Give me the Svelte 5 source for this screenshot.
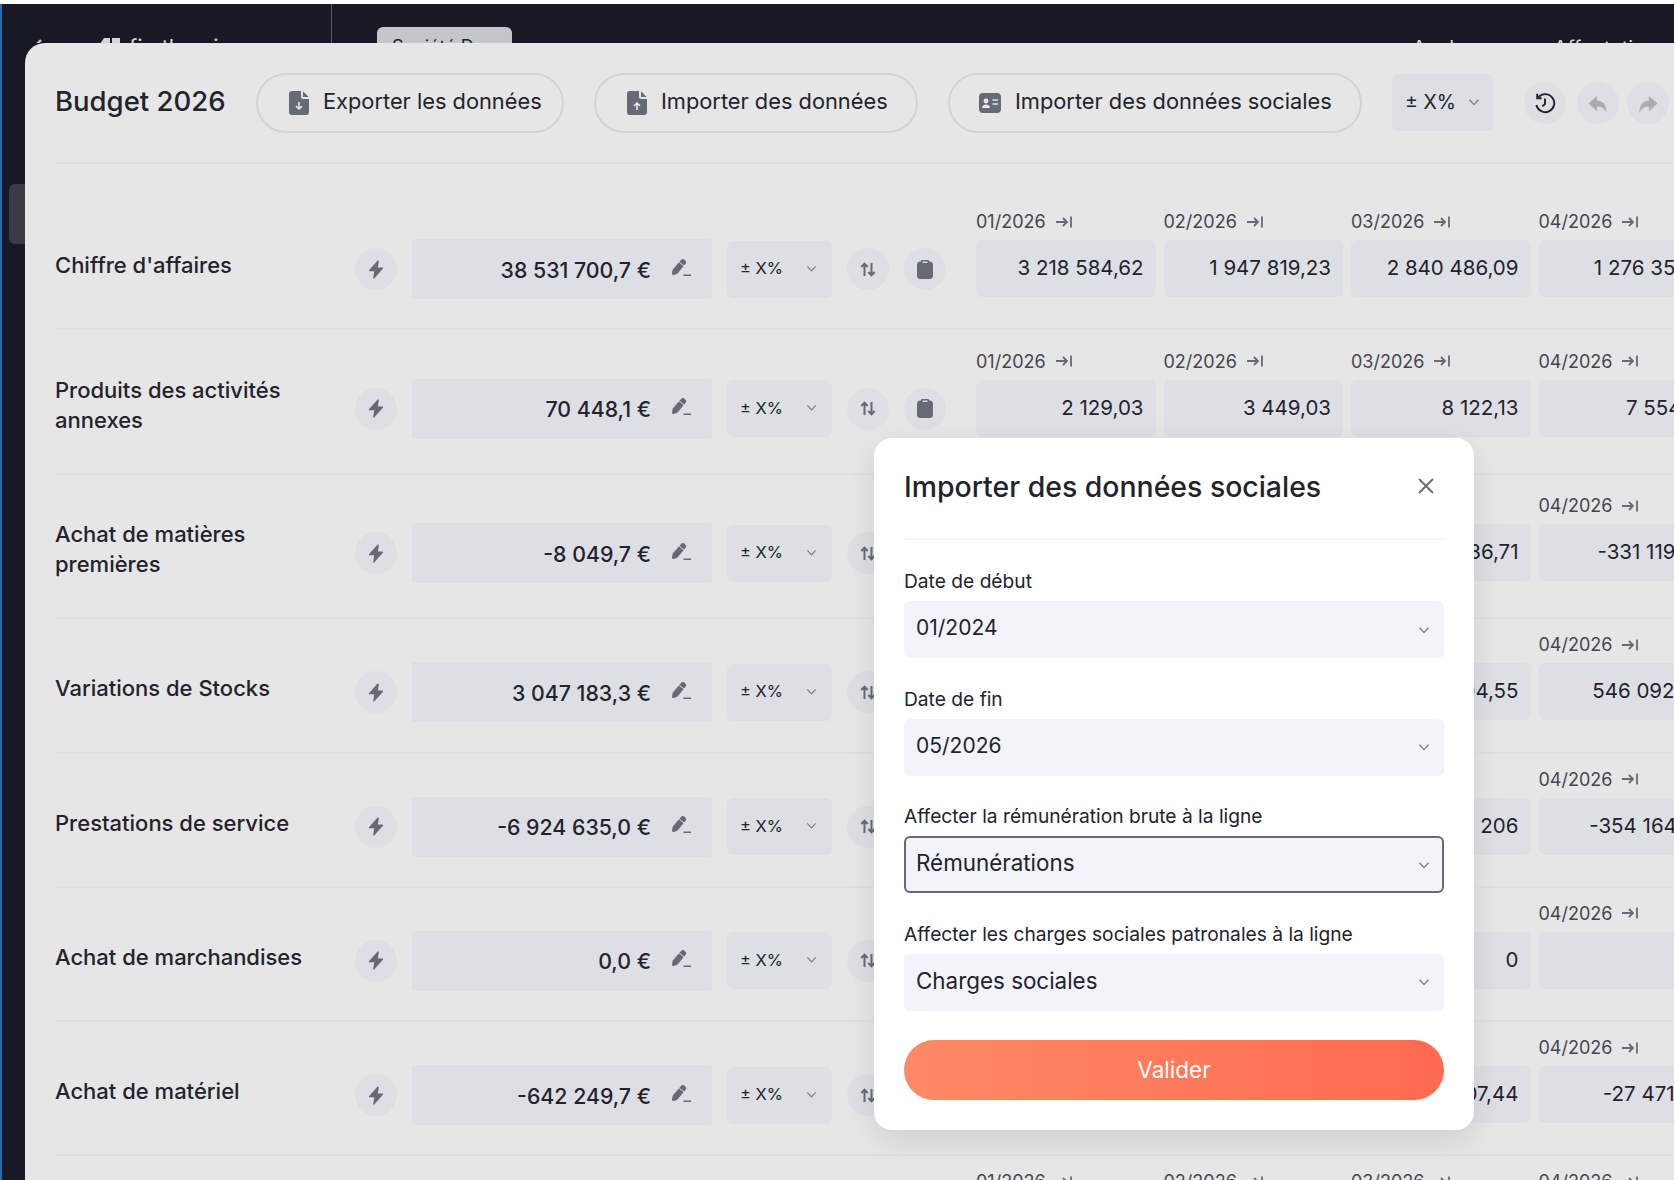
<script lang="ts">
  const months = ['01/2026', '02/2026', '03/2026', '04/2026'];

  const rows = [
    { title: "Chiffre d'affaires", total: '38 531 700,7 €', cells: ['3 218 584,62', '1 947 819,23', '2 840 486,09', '1 276 354,6'] },
    { title: 'Produits des activités annexes', tall: true, total: '70 448,1 €', cells: ['2 129,03', '3 449,03', '8 122,13', '7 554,18'] },
    { title: 'Achat de matières premières', tall: true, total: '-8 049,7 €', cells: ['-412 906,12', '-286 340,55', '-507 136,71', '-331 119,80'] },
    { title: 'Variations de Stocks', total: '3 047 183,3 €', cells: ['318 204,10', '421 770,62', '275 604,55', '546 092,90'] },
    { title: 'Prestations de service', total: '-6 924 635,0 €', cells: ['-512 880', '-604 118', '-490 206', '-354 164,70'] },
    { title: 'Achat de marchandises', total: '0,0 €', cells: ['0', '0', '0', '0'] },
    { title: 'Achat de matériel', total: '-642 249,7 €', cells: ['-31 204,18', '-42 661,02', '-58 207,44', '-27 471,90'] },
    { title: 'Services extérieurs', total: '-118 402,5 €', cells: ['-9 204,11', '-8 731,40', '-10 118,06', '-9 870,22'] }
  ];

  const fields = [
    { label: 'Date de début', value: '01/2024', date: true },
    { label: 'Date de fin', value: '05/2026', date: true },
    { label: 'Affecter la rémunération brute à la ligne', value: 'Rémunérations', focused: true },
    { label: 'Affecter les charges sociales patronales à la ligne', value: 'Charges sociales' }
  ];
</script>

{#snippet chevron(size = 14)}
  <svg class="chevron" width={size} height={size} viewBox="0 0 14 14" fill="none" stroke="currentColor" stroke-width="1.3"><path d="M2.5 4.8 7 9.6l4.5-4.8" /></svg>
{/snippet}

{#snippet fileIcon(up = false)}
  <svg width="20" height="24" viewBox="0 0 20 24">
    <path fill="#666a75" d="M3 0h9v5.5a2.5 2.5 0 0 0 2.5 2.5H20v13a3 3 0 0 1-3 3H3a3 3 0 0 1-3-3V3a3 3 0 0 1 3-3Z" />
    <path fill="#666a75" d="M14 .3 19.7 6h-5.2a.5.5 0 0 1-.5-.5Z" />
    <path fill="none" stroke="#e6e6e6" stroke-width="1.6" d={up ? 'M10 19v-7M7 14.8 10 12l3 2.8' : 'M10 11v7M7 15.2l3 2.8 3-2.8'} />
  </svg>
{/snippet}

<div class="page">
  <header class="topbar">
    <div class="brand">
      <svg class="back" width="14" height="20" viewBox="0 0 14 20" fill="none" stroke="#c9cad0" stroke-width="2.4"><path d="M11 2 3 10l8 8" /></svg>
      <svg class="logo" width="22" height="20" viewBox="0 0 22 20" fill="#d4d5da"><path d="M0 9 6 0h6v20H0ZM14 0h8v20h-8Z" /></svg>
      <span>fin the air</span>
    </div>
    <div class="tab">Société Demo</div>
    <nav class="topnav">
      <span>Analyse</span>
      <span>Affectation</span>
    </nav>
  </header>

  <div class="handle"></div>

  <main class="panel">
    <div class="toolbar">
      <h1>Budget 2026</h1>
      <button class="pill export">{@render fileIcon(false)} <span>Exporter les données</span></button>
      <button class="pill import">{@render fileIcon(true)} <span>Importer des données</span></button>
      <button class="pill social">
        <svg width="22" height="20" viewBox="0 0 22 20">
          <rect width="22" height="20" rx="4" fill="#666a75" />
          <circle cx="7" cy="8" r="2.4" fill="#e6e6e6" />
          <path fill="#e6e6e6" d="M3 15c0-2.4 1.8-3.6 4-3.6s4 1.2 4 3.6Z" />
          <path stroke="#e6e6e6" stroke-width="1.5" d="M13.5 7H19M13.5 11H19" />
        </svg>
        <span>Importer des données sociales</span>
      </button>
      <div class="percent big">± X% {@render chevron(14)}</div>
      <div class="round history">
        <svg width="22" height="22" viewBox="0 0 22 22" fill="none" stroke="#22232c" stroke-width="1.9"><path d="M4.2 5.5A9 9 0 1 1 2.4 13" /><path d="M3.2 1.8v4.4h4.4" /><path d="M11 6.5V12l-2.6 2.4" /></svg>
      </div>
      <div class="round undo">
        <svg width="22" height="19" viewBox="0 0 22 20" fill="#a9acb4"><path d="M10 1 1 9l9 8v-5c5 0 8 2 10 7 0-8-3-13-10-13Z" /></svg>
      </div>
      <div class="round redo">
        <svg width="22" height="19" viewBox="0 0 22 20" fill="#a9acb4"><path d="M12 1l9 8-9 8v-5c-5 0-8 2-10 7 0-8 3-13 10-13Z" /></svg>
      </div>
    </div>

    <div class="rows">
      {#each rows as row}
        <section class="row" class:tall={row.tall}>
          <h2>{row.title}</h2>
          <div class="round">
            <svg width="16" height="19" viewBox="0 0 16 19" fill="#666a75"><path d="M9.6.5 1 10.2c-.4.5 0 1.1.6 1.1h4.6L5.2 18c-.1.6.6.9 1 .4l8.7-9.6c.4-.5.1-1.2-.6-1.2H9.9l.9-6.3c.1-.7-.7-1.1-1.2-.8Z" /></svg>
          </div>
          <div class="total">
            <span>{row.total}</span>
            <svg class="pencil" width="20" height="20" viewBox="0 0 20 20" fill="#666a75">
              <path d="M10.500 1.500c1-.8 2.300-.6 3 .2l1.200 1.300c.7.8.6 2-.2 2.800L7 15c-.5.6-1.200 1-2 1.200l-2.400.7c-1 .2-1.800-.6-1.600-1.600l.6-3c.1-.7.5-1.300 1-1.800Z" />
              <path stroke="#dedfe4" stroke-width="1" d="M8.300 4.200l5 4" />
              <rect x="12.500" y="16.500" width="7.500" height="1.500" />
            </svg>
          </div>
          <div class="percent">± X% {@render chevron(13)}</div>
          <div class="round">
            <svg width="16" height="15" viewBox="0 0 16 15" fill="none" stroke="#666a75" stroke-width="2"><path d="M4.500 14V2M1.300 5 4.500 1.700 7.700 5M11.500 1v12M8.300 10l3.200 3.300 3.200-3.300" /></svg>
          </div>
          <div class="round">
            <svg width="16" height="19" viewBox="0 0 16 19" fill="#666a75"><path d="M5 0h6a1 1 0 0 1 1 1v.5h.5A3.500 3.500 0 0 1 16 5v10.500a3.500 3.500 0 0 1-3.500 3.500h-9A3.500 3.500 0 0 1 0 15.500V5a3.500 3.500 0 0 1 3.500-3.500H4V1a1 1 0 0 1 1-1Z" /><rect x="5.500" y="1.600" width="5" height="1.500" rx=".7" fill="#dedfe4" /></svg>
          </div>
          <div class="months">
            {#each months as month, i}
              <div class="month">
                <div class="month-label">
                  <span>{month}</span>
                  <svg width="18" height="14" viewBox="0 0 18 14" fill="none" stroke="#666a75" stroke-width="1.800"><path d="M1 7h11M8 3l4 4-4 4M16 1.500v11" /></svg>
                </div>
                <div class="cell">{row.cells[i]}</div>
              </div>
            {/each}
          </div>
        </section>
      {/each}
    </div>
  </main>

  <div class="modal" role="dialog" aria-label="Importer des données sociales">
    <div class="modal-head">
      <h3>Importer des données sociales</h3>
      <svg width="18" height="18" viewBox="0 0 18 18" fill="none" stroke="#666a75" stroke-width="1.800"><path d="M2 2l14 14M16 2 2 16" /></svg>
    </div>
    {#each fields as field}
      <div class="field">
        <div class="field-label">{field.label}</div>
        <div class="select" class:focused={field.focused} class:date={field.date}>
          <span>{field.value}</span>
          {@render chevron(14)}
        </div>
      </div>
    {/each}
    <button class="submit">Valider</button>
  </div>
</div>

<style>
  :global(body) {
    margin: 0;
    background: #181924;
  }

  .page {
    position: relative;
    width: 1674px;
    height: 1180px;
    overflow: hidden;
    background: #181924;
    border-top: 4px solid #ffffff;
    box-sizing: border-box;
    font-family: Inter, 'Noto Sans', sans-serif;
    color: #22232c;
  }

  .page::before {
    content: '';
    position: absolute;
    left: 0;
    top: 0;
    bottom: 0;
    width: 2px;
    background: #2a6aa8;
  }

  .topbar {
    display: flex;
    align-items: flex-start;
    height: 39px;
    overflow: hidden;
    color: #d4d5da;
    white-space: nowrap;
  }

  .brand {
    display: flex;
    align-items: flex-start;
    flex: none;
    width: 332px;
    height: 100%;
    padding: 30px 0 0 30px;
    box-sizing: border-box;
    border-right: 1px solid #5a5b66;
    font-size: 22px;
  }

  .back {
    margin: 4px 54px 0 0;
  }

  .logo {
    margin: 4px 9px 0 0;
  }

  .tab {
    margin: 23px 0 0 45px;
    width: 135px;
    height: 40px;
    padding: 9px 15px;
    box-sizing: border-box;
    background: #c5c6ca;
    border-radius: 6px 6px 0 0;
    color: #22232c;
    font-size: 18px;
    overflow: hidden;
  }

  .topnav {
    display: flex;
    gap: 66px;
    margin: 32px 0 0 auto;
    padding-right: 17px;
    font-size: 20px;
  }

  .handle {
    position: absolute;
    left: 9px;
    top: 180px;
    width: 20px;
    height: 60px;
    background: #3a3b45;
    border-radius: 6px 0 0 6px;
  }

  .panel {
    position: absolute;
    left: 25px;
    top: 39px;
    width: 1700px;
    height: 1200px;
    padding: 0 0 0 30px;
    box-sizing: border-box;
    background: #e6e6e6;
    border-radius: 20px 0 0 0;
  }

  .toolbar {
    display: flex;
    align-items: center;
    height: 121px;
    box-sizing: border-box;
    border-bottom: 2px solid #dfe0e5;
  }

  h1 {
    margin: -3px 31px 0 0;
    width: 170px;
    font-size: 27.500px;
    font-weight: 500;
    white-space: nowrap;
  }

  .pill {
    display: flex;
    align-items: center;
    gap: 14px;
    flex: none;
    height: 60px;
    margin-right: 30px;
    padding: 0 0 0 31px;
    box-sizing: border-box;
    border: 2px solid #cfd3da;
    border-radius: 30px;
    background: transparent;
    color: #22232c;
    font: inherit;
    font-size: 21.800px;
    white-space: nowrap;
  }

  .pill span {
    padding-bottom: 3px;
  }

  .export {
    width: 308px;
  }

  .import {
    width: 324px;
  }

  .social {
    width: 414px;
    padding-left: 29px;
  }

  .percent {
    display: flex;
    align-items: center;
    justify-content: space-between;
    flex: none;
    width: 105px;
    height: 57px;
    margin-left: 15px;
    padding: 0 14px 2px 13px;
    box-sizing: border-box;
    background: #dedfe4;
    border-radius: 6px;
    font-size: 16.500px;
    white-space: pre;
  }

  .percent.big {
    margin-left: 0;
    width: 101px;
    padding-right: 12px;
    font-size: 19.500px;
  }

  .chevron {
    color: #7a7d88;
    flex: none;
  }

  .round {
    display: flex;
    align-items: center;
    justify-content: center;
    flex: none;
    width: 42px;
    height: 42px;
    border-radius: 50%;
    background: #dedfe4;
  }

  .history {
    margin-left: 31px;
  }

  .undo {
    margin: 0 8px 0 11px;
  }

  .undo svg,
  .redo svg {
    margin-top: 4px;
  }

  .rows {
    padding-top: 32px;
    width: 1700px;
  }

  .row {
    display: flex;
    align-items: center;
    height: 134.250px;
    padding: 44px 0 30px;
    box-sizing: border-box;
    border-bottom: 2px solid #dfe0e5;
  }

  .row.tall {
    height: 144.500px;
    padding: 49px 0 35px;
  }

  .row > .round {
    margin-right: 15px;
  }

  h2 {
    flex: none;
    width: 300px;
    margin: -8px 0 0;
    padding-right: 30px;
    box-sizing: border-box;
    font-size: 22px;
    line-height: 30px;
    font-weight: 500;
  }

  .total {
    display: flex;
    align-items: center;
    justify-content: flex-end;
    gap: 20px;
    flex: none;
    width: 300px;
    height: 60px;
    padding-right: 21px;
    box-sizing: border-box;
    background: #dedfe4;
    border-radius: 3px;
    font-size: 21.300px;
    font-weight: 500;
    white-space: nowrap;
  }

  .total span {
    padding-top: 1px;
  }

  .pencil {
    margin-top: -3px;
  }

  .total + .percent {
    margin-right: 15px;
  }

  .months {
    display: flex;
    gap: 8px;
    height: 60px;
    margin-left: 15px;
  }

  .month {
    position: relative;
    flex: none;
    width: 179.500px;
  }

  .month-label {
    position: absolute;
    left: 0;
    bottom: 67px;
    display: flex;
    align-items: center;
    gap: 9px;
    color: #44464f;
    font-size: 18px;
  }

  .cell {
    height: 57px;
    margin-top: 1px;
    padding-right: 12px;
    line-height: 55px;
    box-sizing: border-box;
    text-align: right;
    background: #dedfe4;
    border-radius: 6px;
    font-size: 20.500px;
    white-space: nowrap;
    overflow: hidden;
  }

  .modal {
    position: absolute;
    left: 874px;
    top: 434px;
    width: 600px;
    height: 692px;
    padding: 0 30px;
    box-sizing: border-box;
    background: #ffffff;
    border-radius: 18px;
    box-shadow: 0 10px 30px rgba(0, 0, 0, 0.1);
  }

  .modal-head {
    display: flex;
    align-items: center;
    justify-content: space-between;
    height: 102px;
    margin-bottom: 29px;
    padding: 0 9px 4px 0;
    box-sizing: border-box;
    border-bottom: 2px solid #f3f4f9;
  }

  h3 {
    margin: 0;
    font-size: 28.400px;
    font-weight: 500;
    color: #22232c;
  }

  .field {
    margin-bottom: 28.500px;
  }

  .field-label {
    height: 30px;
    margin: -2px 0 4px;
    font-size: 19.200px;
    line-height: 28px;
    white-space: nowrap;
  }

  .select {
    display: flex;
    align-items: center;
    justify-content: space-between;
    height: 57px;
    padding: 0 13px 0 12px;
    box-sizing: border-box;
    background: #f3f4f9;
    border-radius: 6px;
    font-size: 22.400px;
  }

  .select span {
    padding-bottom: 4px;
  }

  .select.date {
    font-size: 21px;
  }

  .select.focused {
    border: 2px solid #666a75;
    padding: 0 11px 0 10px;
  }

  .submit {
    display: block;
    width: 100%;
    height: 60px;
    margin-top: 29.500px;
    padding-bottom: 3px;
    border: none;
    border-radius: 30px;
    background: linear-gradient(90deg, #ff8a65, #ff6a50);
    color: #ffffff;
    font: inherit;
    font-size: 22.500px;
  }
</style>
